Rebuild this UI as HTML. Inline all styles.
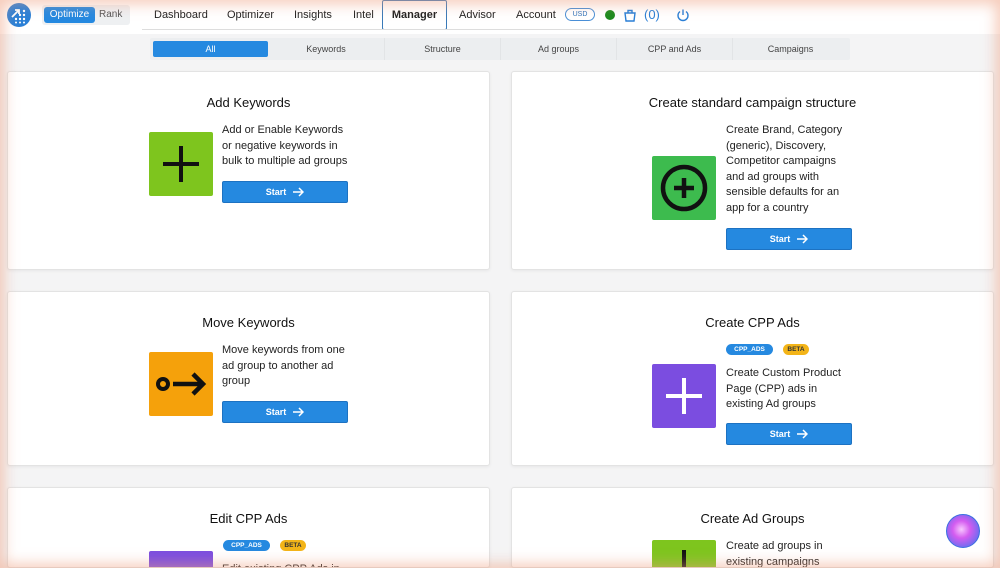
<!DOCTYPE html>
<html><head><style>
*{box-sizing:border-box;margin:0;padding:0}
html,body{width:1000px;height:568px;overflow:hidden}
body{background:#f4f4f5;font-family:"Liberation Sans",sans-serif;color:#222;position:relative}
.top{position:absolute;left:0;top:0;width:1000px;height:34px;background:#fff}
.logo{position:absolute;left:7px;top:3px;width:24px;height:24px;border-radius:50%;background:#2a7fd6}
.seg{position:absolute;left:42px;top:5px;width:88px;height:20px;background:#eef0f2;border-radius:3px;font-size:10px}
.seg .a{position:absolute;left:2px;top:2px;width:51px;height:16px;background:#2589e0;color:#fff;border-radius:3px;text-align:center;line-height:16px}
.seg .b{position:absolute;left:57px;top:0;line-height:20px;color:#555}
.nav{position:absolute;top:0;height:30px;font-size:11px;line-height:30px;color:#222}
.navline{position:absolute;left:142px;top:29px;width:548px;height:1px;background:#ddd}
.mgr{position:absolute;left:382px;top:0;width:65px;height:30px;border:1.5px solid #3a7ab8;border-radius:2px;font-weight:bold;text-align:center;line-height:28px;font-size:11px;background:#fff}
.usd{position:absolute;left:565px;top:8px;width:30px;height:13px;border:1px solid #4a8fd6;border-radius:7px;font-size:7px;color:#2a6fb8;text-align:center;line-height:11px}
.tabs{position:absolute;left:150px;top:38px;width:700px;height:22px;background:#eceef0;border-radius:2px;font-size:9px;color:#444}
.tabs div{position:absolute;top:0;width:116px;height:22px;line-height:22px;text-align:center;border-left:1px solid #e2e4e6}
.tabs .on{background:#2589e0;color:#fff;left:3px;top:3px;height:16px;line-height:16px;width:115px;border-radius:2px;border:none}
.card{position:absolute;background:#fff;border:1px solid #e3e3e3;border-radius:3px;box-shadow:0 1px 3px rgba(0,0,0,.06);overflow:hidden}
.t{position:absolute;font-size:13px;text-align:center;width:100%;color:#111}
.ic{position:absolute;width:64px;height:64px;border-radius:2px}
.tx{position:absolute;font-size:11px;line-height:15.6px;color:#222;width:128px}
.btn{position:absolute;width:126px;height:22px;background:#2589e0;border:1px solid #1d72c2;border-radius:2px;color:#fff;font-size:9px;font-weight:bold;text-align:center;line-height:20px}
.btn svg{vertical-align:-2px;margin-left:6px}
.bd{position:absolute;height:11px;border-radius:6px;font-size:6.5px;font-weight:bold;line-height:11px;text-align:center}
.c{background:#2589e0;color:#fff;width:47px}.be{background:#f3b418;color:#333;width:26px}
.vig{position:absolute;left:0;top:0;width:1000px;height:568px;box-shadow:inset 0 0 14px 4px rgba(238,160,130,.55);pointer-events:none}
</style></head><body>
<div class="top"></div>
<div class="logo"><svg width="24" height="24"><g fill="#fff"><circle cx="9" cy="16" r="1.2"/><circle cx="13" cy="16" r="1.2"/><circle cx="17" cy="16" r="1.2"/><circle cx="13" cy="12" r="1.2"/><circle cx="17" cy="12" r="1.2"/><circle cx="17" cy="8" r="1.2"/><circle cx="9" cy="19.5" r="1"/><circle cx="13" cy="19.5" r="1"/><circle cx="17" cy="19.5" r="1"/></g><path d="M5 14 L12 7 M8 7h4v4" stroke="#fff" stroke-width="1.8" fill="none"/></svg></div>
<div class="seg"><div class="a">Optimize</div><div class="b">Rank</div></div>
<div class="nav" style="left:154px">Dashboard</div>
<div class="nav" style="left:227px">Optimizer</div>
<div class="nav" style="left:294px">Insights</div>
<div class="nav" style="left:353px">Intel</div>
<div class="mgr">Manager</div>
<div class="nav" style="left:459px">Advisor</div>
<div class="nav" style="left:516px">Account</div>
<div class="usd">USD</div>
<div style="position:absolute;left:605px;top:10px;width:10px;height:10px;border-radius:50%;background:#1e8a1e"></div>
<svg style="position:absolute;left:623px;top:8px" width="14" height="14"><path d="M2 5h10l-1 8H3z M5 5V2.5h4V5" stroke="#2a7fd6" stroke-width="1.4" fill="none"/></svg>
<div style="position:absolute;left:644px;top:7px;font-size:13px;color:#2a7fd6">(0)</div>
<svg style="position:absolute;left:676px;top:8px" width="14" height="14"><path d="M4 3.5A5 5 0 1 0 10 3.5 M7 1.5V7" stroke="#2a7fd6" stroke-width="1.4" fill="none"/></svg>
<div class="navline"></div>
<div class="tabs"><div class="on">All</div><div style="left:118px;border:none">Keywords</div><div style="left:234px">Structure</div><div style="left:350px">Ad groups</div><div style="left:466px">CPP and Ads</div><div style="left:582px">Campaigns</div></div>

<div class="card" style="left:7px;top:71px;width:483px;height:199px">
<div class="t" style="top:23px">Add Keywords</div>
<div class="ic" style="left:141px;top:60px;background:#7ec51e"><svg width="64" height="64"><path d="M32 14v36M14 32h36" stroke="#111" stroke-width="4"/></svg></div>
<div class="tx" style="left:214px;top:51px">Add or Enable Keywords or negative keywords in bulk to multiple ad groups</div>
<div class="btn" style="left:214px;top:109px">Start<svg width="12" height="10"><path d="M1 5h10M7 1l4 4-4 4" stroke="#fff" stroke-width="1.5" fill="none"/></svg></div></div>

<div class="card" style="left:511px;top:71px;width:483px;height:199px">
<div class="t" style="top:23px">Create standard campaign structure</div>
<div class="ic" style="left:140px;top:84px;background:#3dbb4e"><svg width="64" height="64"><circle cx="32" cy="32" r="21" stroke="#111" stroke-width="4.5" fill="none"/><path d="M32 22v20M22 32h20" stroke="#111" stroke-width="4.5"/></svg></div>
<div class="tx" style="left:214px;top:51px">Create Brand, Category (generic), Discovery, Competitor campaigns and ad groups with sensible defaults for an app for a country</div>
<div class="btn" style="left:214px;top:156px">Start<svg width="12" height="10"><path d="M1 5h10M7 1l4 4-4 4" stroke="#fff" stroke-width="1.5" fill="none"/></svg></div></div>

<div class="card" style="left:7px;top:291px;width:483px;height:175px">
<div class="t" style="top:23px">Move Keywords</div>
<div class="ic" style="left:141px;top:60px;background:#f5a10b"><svg width="64" height="64"><circle cx="14" cy="32" r="5" stroke="#111" stroke-width="4" fill="none"/><path d="M24 32h30M44 22l10 10-10 10" stroke="#111" stroke-width="4.5" fill="none"/></svg></div>
<div class="tx" style="left:214px;top:51px">Move keywords from one ad group to another ad group</div>
<div class="btn" style="left:214px;top:109px">Start<svg width="12" height="10"><path d="M1 5h10M7 1l4 4-4 4" stroke="#fff" stroke-width="1.5" fill="none"/></svg></div></div>

<div class="card" style="left:511px;top:291px;width:483px;height:175px">
<div class="t" style="top:23px">Create CPP Ads</div>
<div class="bd c" style="left:214px;top:52px">CPP_ADS</div><div class="bd be" style="left:271px;top:52px">BETA</div>
<div class="ic" style="left:140px;top:72px;background:#7b4de0"><svg width="64" height="64"><path d="M32 14v36M14 32h36" stroke="#fff" stroke-width="4"/></svg></div>
<div class="tx" style="left:214px;top:74px">Create Custom Product Page (CPP) ads in existing Ad groups</div>
<div class="btn" style="left:214px;top:131px">Start<svg width="12" height="10"><path d="M1 5h10M7 1l4 4-4 4" stroke="#fff" stroke-width="1.5" fill="none"/></svg></div></div>

<div class="card" style="left:7px;top:487px;width:483px;height:81px">
<div class="t" style="top:23px">Edit CPP Ads</div>
<div class="bd c" style="left:215px;top:52px">CPP_ADS</div><div class="bd be" style="left:272px;top:52px">BETA</div>
<div class="ic" style="left:141px;top:63px;background:#7b4de0"></div>
<div class="tx" style="left:214px;top:74px">Edit existing CPP Ads in</div></div>

<div class="card" style="left:511px;top:487px;width:483px;height:81px">
<div class="t" style="top:23px">Create Ad Groups</div>
<div class="ic" style="left:140px;top:52px;background:#7ec51e"><svg width="64" height="64"><path d="M32 10v30" stroke="#111" stroke-width="4"/></svg></div>
<div class="tx" style="left:214px;top:51px">Create ad groups in existing campaigns</div></div>

<div style="position:absolute;left:946px;top:514px;width:34px;height:34px;border-radius:50%;background:radial-gradient(circle at 45% 45%,#f8c8ff 0,#d45cf0 35%,#7a6af0 70%,#4f7ae8 100%);border:1px solid #3a6fe0"></div>
<div class="vig"></div>
</body></html>
